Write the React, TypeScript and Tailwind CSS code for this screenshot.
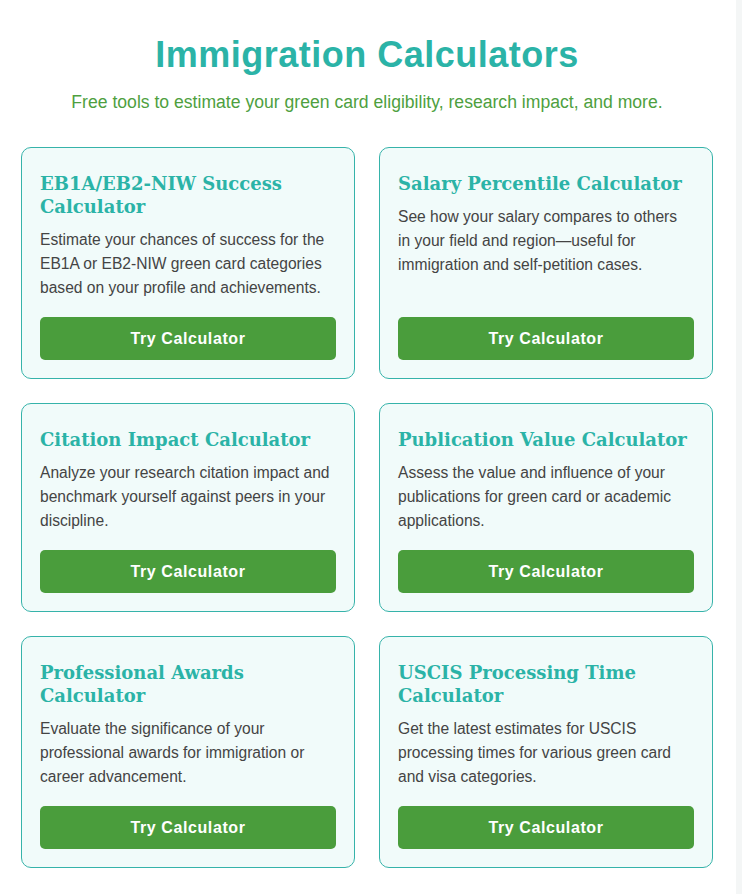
import React from "react";

const cards = [
  {
    title: "EB1A/EB2-NIW Success Calculator",
    desc: "Estimate your chances of success for the EB1A or EB2-NIW green card categories based on your profile and achievements.",
  },
  {
    title: "Salary Percentile Calculator",
    desc: "See how your salary compares to others in your field and region\u2014useful for immigration and self-petition cases.",
  },
  {
    title: "Citation Impact Calculator",
    desc: "Analyze your research citation impact and benchmark yourself against peers in your discipline.",
  },
  {
    title: "Publication Value Calculator",
    desc: "Assess the value and influence of your publications for green card or academic applications.",
  },
  {
    title: "Professional Awards Calculator",
    desc: "Evaluate the significance of your professional awards for immigration or career advancement.",
  },
  {
    title: "USCIS Processing Time Calculator",
    desc: "Get the latest estimates for USCIS processing times for various green card and visa categories.",
  },
];

export default function App() {
  return (
    <div className="flex min-h-[894px] w-[742px] bg-[#f4f6f6]">
      <div className="w-[736px] bg-white pt-[33px] pb-[28px] pl-[21px] pr-[23px] font-['Liberation_Sans',Arial,sans-serif]">
        <h1 className="text-center text-[36px] leading-[44px] font-bold tracking-[0.5px] text-[#2bb3a7]">
          Immigration Calculators
        </h1>
        <p className="mt-[14px] text-center text-[17.6px] leading-[22px] text-[#4e9f40]">
          Free tools to estimate your green card eligibility, research impact, and more.
        </p>
        <div className="mt-[34px] grid grid-cols-2 gap-x-[24px] gap-y-[24px]">
          {cards.map((c) => (
            <div
              key={c.title}
              className="flex flex-col rounded-[10px] border border-[#36b3aa] bg-[#f1fbfa] px-[18px] pt-[24px] pb-[18px]"
            >
              <h2 className="font-['DejaVu_Serif',serif] text-[18px] leading-[23px] font-bold text-[#2bb3a7]">
                {c.title}
              </h2>
              <p className="mt-[10px] pr-[3px] text-[15.6px] leading-[24px] text-[#444444]">{c.desc}</p>
              <div className="flex-1" />
              <button className="mt-[17px] h-[43px] w-full rounded-[5px] bg-[#4a9d3c] text-[16px] font-bold tracking-[0.6px] text-white">
                Try Calculator
              </button>
            </div>
          ))}
        </div>
      </div>
    </div>
  );
}
